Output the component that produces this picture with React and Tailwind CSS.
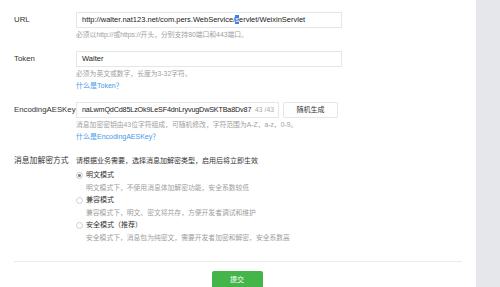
import React from 'react';

const font = { fontFamily: '"Liberation Sans", "Noto Sans CJK SC", sans-serif' };

function Row({ label, children, className = '' }) {
  return (
    <div className={`flex ${className}`}>
      <div className="w-[62px] shrink-0 whitespace-nowrap text-[7.8px] text-[#333] leading-[16px]">{label}</div>
      <div className="flex-1">{children}</div>
    </div>
  );
}

function Radio({ checked, label, desc }) {
  return (
    <div>
      <div className="flex items-center gap-[3px] h-[12px]">
        <span className={`w-[7px] h-[7px] rounded-full border flex items-center justify-center ${checked ? 'border-[#c8c8c8]' : 'border-[#d0d0d0]'}`}>
          {checked && <span className="w-[3px] h-[3px] rounded-full bg-[#777]" />}
        </span>
        <span className="text-[7px] text-[#333]">{label}</span>
      </div>
      <div className="pl-[10px] text-[6.8px] text-[#a0a0a0] leading-[13px]">{desc}</div>
    </div>
  );
}

export default function App() {
  return (
    <div className="flex w-[500px] h-[287px] overflow-hidden bg-white" style={font}>
      <div className="w-[476px] pl-[14px] pr-[14px] pt-[12px]">
        <Row label="URL">
          <div className="w-[266px] h-[16px] border border-[#e6e6e6] px-[5px] text-[7.5px] text-[#222] leading-[14px] whitespace-nowrap">
            http://walter.nat123.net/com.pers.WebService/<span className="bg-[#3b82f6] text-white">s</span>ervlet/WeixinServlet
          </div>
          <div className="text-[6.8px] text-[#a0a0a0] leading-[14px]">必须以http://或https://开头，分别支持80端口和443端口。</div>
        </Row>

        <Row label="Token" className="mt-[9px]">
          <div className="w-[266px] h-[16px] border border-[#e6e6e6] px-[5px] text-[7.5px] text-[#222] leading-[14px]">Walter</div>
          <div className="text-[6.8px] text-[#a0a0a0] leading-[13px]">必须为英文或数字，长度为3-32字符。</div>
          <div className="text-[7px] text-[#459ae9] leading-[11px]">什么是Token？</div>
        </Row>

        <Row label="EncodingAESKey" className="mt-[11px]">
          <div className="flex gap-[4px]">
            <div className="w-[203px] h-[16px] border border-[#e6e6e6] pl-[5px] pr-[4px] leading-[14px] whitespace-nowrap flex items-baseline overflow-hidden">
              <span className="text-[7.2px] tracking-[-0.15px] text-[#222]">naLwmQdCd85LzOk9LeSF4dnLryvugDwSKTBa8Dv87</span>
              <span className="ml-auto text-[#aaa] text-[6.8px]">43 /43</span>
            </div>
            <div className="w-[55px] h-[16px] border border-[#e6e6e6] rounded-[2px] text-[7px] text-[#333] leading-[14px] text-center">随机生成</div>
          </div>
          <div className="text-[6.8px] text-[#a0a0a0] leading-[13px]">消息加密密钥由43位字符组成，可随机修改，字符范围为A-Z，a-z，0-9。</div>
          <div className="text-[7px] text-[#459ae9] leading-[11px]">什么是EncodingAESKey？</div>
        </Row>

        <Row label="消息加解密方式" className="mt-[11px]">
          <div className="text-[7px] text-[#333] leading-[16px]">请根据业务需要，选择消息加解密类型，启用后将立即生效</div>
          <Radio checked label="明文模式" desc="明文模式下，不使用消息体加解密功能，安全系数较低" />
          <Radio label="兼容模式" desc="兼容模式下，明文、密文将共存，方便开发者调试和维护" />
          <Radio label="安全模式（推荐）" desc="安全模式下，消息包为纯密文，需要开发者加密和解密，安全系数高" />
        </Row>

        <div className="mt-[17px] w-[448px] border-t border-[#ececec]" />
        <div className="flex justify-center mt-[9px]">
          <div className="w-[51px] h-[18px] bg-[#44b549] text-white text-[7px] leading-[18px] text-center rounded-[2px] -ml-[2px]">提交</div>
        </div>
      </div>
      <div className="flex-1 bg-[#e6e7eb]" />
    </div>
  );
}
